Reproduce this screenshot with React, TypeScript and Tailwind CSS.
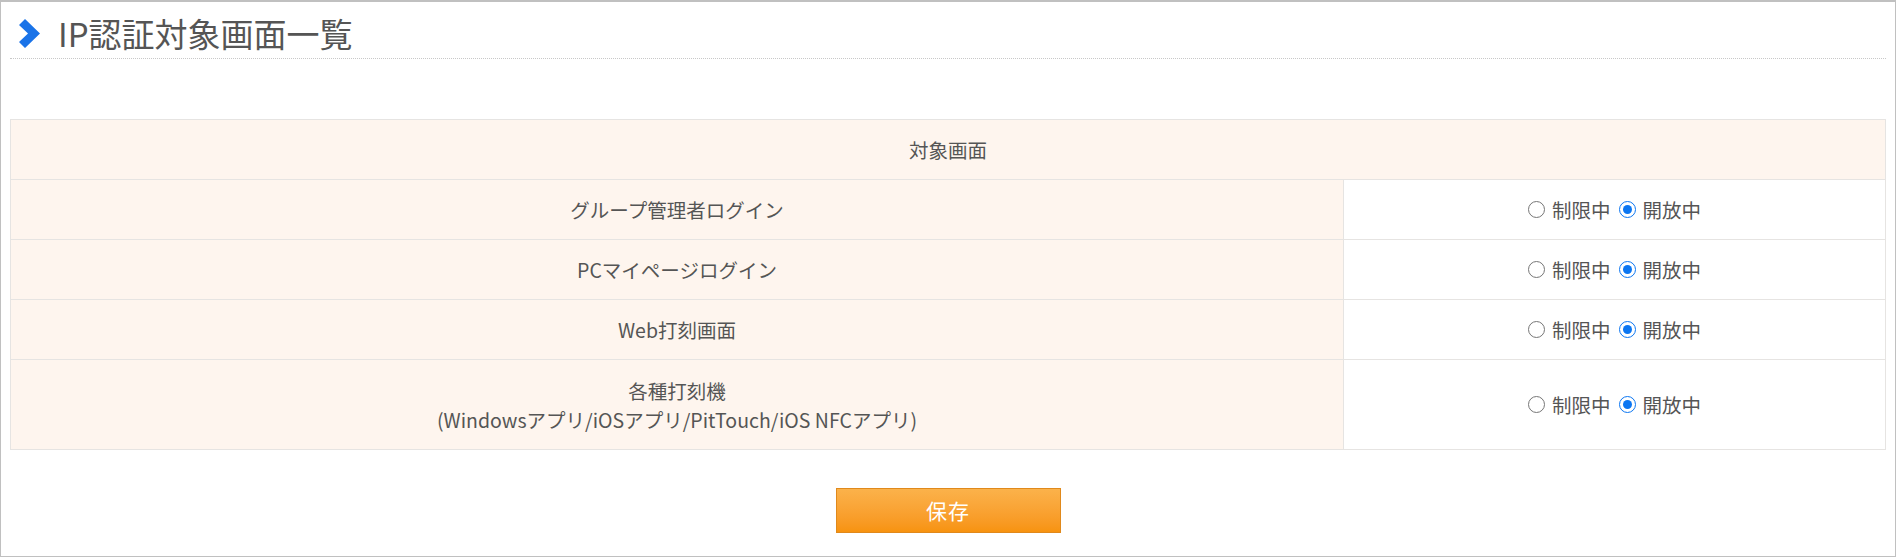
import React from 'react'

type Row = {
  label: React.ReactNode
  tall?: boolean
}

const rows: Row[] = [
  { label: 'グループ管理者ログイン' },
  { label: 'PCマイページログイン' },
  { label: 'Web打刻画面' },
  {
    label: (
      <>
        各種打刻機
        <br />
        (Windowsアプリ/iOSアプリ/PitTouch/iOS NFCアプリ)
      </>
    ),
    tall: true,
  },
]

const Radio = ({ checked }: { checked?: boolean }) =>
  checked ? (
    <span className="flex h-[17px] w-[17px] items-center justify-center rounded-full border-[1.5px] border-[#0b76f2] bg-white">
      <span className="h-[9px] w-[9px] rounded-full bg-[#0b76f2]" />
    </span>
  ) : (
    <span className="h-[17px] w-[17px] rounded-full border border-[#767676] bg-white" />
  )

const Chevron = () => (
  <svg width="21" height="29" viewBox="0 0 21 29" className="shrink-0">
    <polygon points="0,6 6,0 21,14.5 6,29 0,23 9,14.5" fill="#1a73e8" />
  </svg>
)

export default function App() {
  return (
    <div
      className="h-[557px] border border-t-2 border-[#c0c0c0] bg-white px-[9px] text-[#555]"
      style={{ fontFamily: '"Noto Sans CJK JP", "Noto Sans", sans-serif' }}
    >
      {/* title */}
      <div className="flex h-[57px] items-center gap-[18px] border-b border-dotted border-[#c8c8c8] pl-[9px] pt-[6px]">
        <Chevron />
        <h1 className="text-[33px] leading-none text-[#555]">IP認証対象画面一覧</h1>
      </div>

      {/* table */}
      <div className="mt-[60px] grid grid-cols-[1333px_1fr] border-l border-t border-[#e6e4e2] text-[19.5px]">
        <div className="col-span-2 flex h-[60px] items-center justify-center border-b border-r border-[#e6e4e2] bg-[#fef5ee]">
          対象画面
        </div>
        {rows.map((row, i) => (
          <React.Fragment key={i}>
            <div
              className={`flex items-center justify-center border-b border-r border-[#e6e4e2] bg-[#fef5ee] text-center leading-[29px] ${
                row.tall ? 'h-[90px]' : 'h-[60px]'
              }`}
            >
              <div>{row.label}</div>
            </div>
            <div className="flex items-center justify-center gap-[8px] border-b border-r border-[#e6e4e2] bg-white">
              <label className="flex items-center gap-[7px]">
                <Radio />
                <span>制限中</span>
              </label>
              <label className="flex items-center gap-[7px]">
                <Radio checked />
                <span>開放中</span>
              </label>
            </div>
          </React.Fragment>
        ))}
      </div>

      {/* save */}
      <div className="mt-[38px] flex justify-center">
        <button className="h-[45px] w-[225px] border border-[#e0891c] bg-gradient-to-b from-[#fbb24a] to-[#f7930e] text-[21px] tracking-[1px] text-white">
          保存
        </button>
      </div>
    </div>
  )
}
